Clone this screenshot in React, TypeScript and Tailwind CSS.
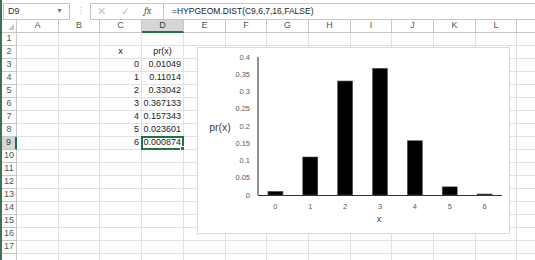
import React from "react";

const cols = ["A", "B", "C", "D", "E", "F", "G", "H", "I", "J", "K", "L", "M"];
const rows = Array.from({ length: 18 }, (_, i) => i + 1);

const probs = [0.01049, 0.11014, 0.33042, 0.367133, 0.157343, 0.023601, 0.000874];

const cells: Record<string, { text: string; align: "center" | "right" }> = {
  "C2": { text: "x", align: "center" },
  "D2": { text: "pr(x)", align: "center" },
};
probs.forEach((p, i) => {
  cells[`C${i + 3}`] = { text: String(i), align: "right" };
  cells[`D${i + 3}`] = { text: String(p), align: "right" };
});

const font = { fontFamily: '"Liberation Sans", Arial, sans-serif' };

function FormulaBar() {
  return (
    <div className="flex h-[24px] items-start pt-[3px]">
      <div className="ml-[1px] flex h-[17px] w-[67px] items-center justify-between border border-[#c6c6c6] pl-[4px] pr-[6px] text-[9px] text-[#333]">
        <span>D9</span>
        <span className="text-[7px] text-[#777]">▼</span>
      </div>
      <div className="flex h-[17px] w-[20px] items-center justify-center text-[9px] text-[#bdbdbd]">⋮</div>
      <div className="flex h-[17px] w-[73px] items-center border border-r-0 border-[#c6c6c6] bg-white text-[11px]">
        <span className="ml-[6px] text-[#c2c2c2]">✕</span>
        <span className="ml-[15px] text-[#c2c2c2]">✓</span>
        <span className="ml-[14px] font-serif text-[10px] italic text-[#555]">fx</span>
      </div>
      <div className="flex h-[17px] flex-1 items-center border border-r-0 border-[#c6c6c6] pl-[8px] text-[8.5px] text-[#222]">
        =HYPGEOM.DIST(C9,6,7,16,FALSE)
      </div>
    </div>
  );
}

function Chart() {
  const base = 147;
  const scale = 345;
  const ticks = [0, 0.05, 0.1, 0.15, 0.2, 0.25, 0.3, 0.35, 0.4];
  const step = 244 / 7;
  return (
    <div className="absolute left-[195px] top-[27px] h-[187px] w-[313px] border border-[#d9d9d9] bg-white">
      <svg width="313" height="187" className="block" style={font}>
        {ticks.map((t) => (
          <text
            key={t}
            x={52}
            y={base - t * scale}
            textAnchor="end"
            dominantBaseline="central"
            fontSize="7.5"
            fill="#595959"
          >
            {t}
          </text>
        ))}
        <text x={22} y={79} textAnchor="middle" dominantBaseline="central" fontSize="10.5" fill="#404040">
          pr(x)
        </text>
        {probs.map((p, i) => {
          const cx = 60 + (i + 0.5) * step;
          const h = Math.max(p * scale, 1);
          return (
            <g key={i}>
              <rect x={cx - 7.5} y={base - h} width={15} height={h} fill="#000" stroke="#555" strokeWidth="0.6" />
              <text x={cx} y={158} textAnchor="middle" dominantBaseline="central" fontSize="7.5" fill="#595959">
                {i}
              </text>
            </g>
          );
        })}
        <line x1={60} y1={9} x2={60} y2={base} stroke="#222" strokeWidth="1" />
        <line x1={60} y1={base + 0.5} x2={304} y2={base + 0.5} stroke="#333" strokeWidth="1" />
        <text x={181} y={171} textAnchor="middle" dominantBaseline="central" fontSize="9" fill="#404040">
          x
        </text>
      </svg>
    </div>
  );
}

export default function App() {
  return (
    <div className="flex h-[260px] w-[535px] overflow-hidden bg-white" style={font}>
      <div className="h-full w-[2px] shrink-0 bg-[#3f6f55]" />
      <div className="flex min-w-0 flex-1 flex-col">
        <FormulaBar />
        <div className="relative">
          <div className="grid w-[556px] auto-rows-[13px] grid-cols-[15px_42px_41px_42px_42px_42px_41px_42px_42px_41px_42px_42px_41px_42px]">
            <div className="relative border-b border-r border-[#c8c8c8]">
              <div className="absolute bottom-[2px] right-[2px] h-0 w-0 border-b-[6px] border-l-[6px] border-b-[#c8c8c8] border-l-transparent" />
            </div>
            {cols.map((c) =>
              c === "D" ? (
                <div
                  key={c}
                  className="flex items-center justify-center border-b-2 border-r border-b-[#217346] border-r-[#c8c8c8] bg-[#d6d6d6] text-[9px] text-[#1e4e33]"
                >
                  {c}
                </div>
              ) : (
                <div
                  key={c}
                  className="flex items-center justify-center border-b border-r border-[#c8c8c8] text-[9px] text-[#555]"
                >
                  {c === "M" ? null : c}
                </div>
              )
            )}
            {rows.map((r) => (
              <React.Fragment key={r}>
                {r === 9 ? (
                  <div className="flex items-center justify-center border-b border-r-2 border-b-[#c8c8c8] border-r-[#217346] bg-[#d6d6d6] text-[9px] text-[#1e4e33]">
                    {r}
                  </div>
                ) : (
                  <div className="flex items-center justify-center border-b border-r border-[#c8c8c8] text-[9px] text-[#555]">
                    {r < 18 ? r : null}
                  </div>
                )}
                {cols.map((c) => {
                  const cell = cells[`${c}${r}`];
                  const selected = c === "D" && r === 9;
                  return (
                    <div
                      key={c}
                      className={
                        cell && cell.align === "center"
                          ? "flex items-center justify-center border-b border-r border-[#e1e1e1] text-[9px] text-[#222]"
                          : "relative flex items-center justify-end border-b border-r border-[#e1e1e1] pr-[2px] text-[9px] text-[#222]"
                      }
                    >
                      {cell ? cell.text : null}
                      {selected && (
                        <div className="absolute -left-[1px] -top-[1px] h-[14px] w-[43px] border-2 border-[#217346]">
                          <div className="absolute -bottom-[3px] -right-[3px] h-[5px] w-[5px] border border-white bg-[#217346]" />
                        </div>
                      )}
                    </div>
                  );
                })}
              </React.Fragment>
            ))}
          </div>
          <Chart />
        </div>
      </div>
    </div>
  );
}
